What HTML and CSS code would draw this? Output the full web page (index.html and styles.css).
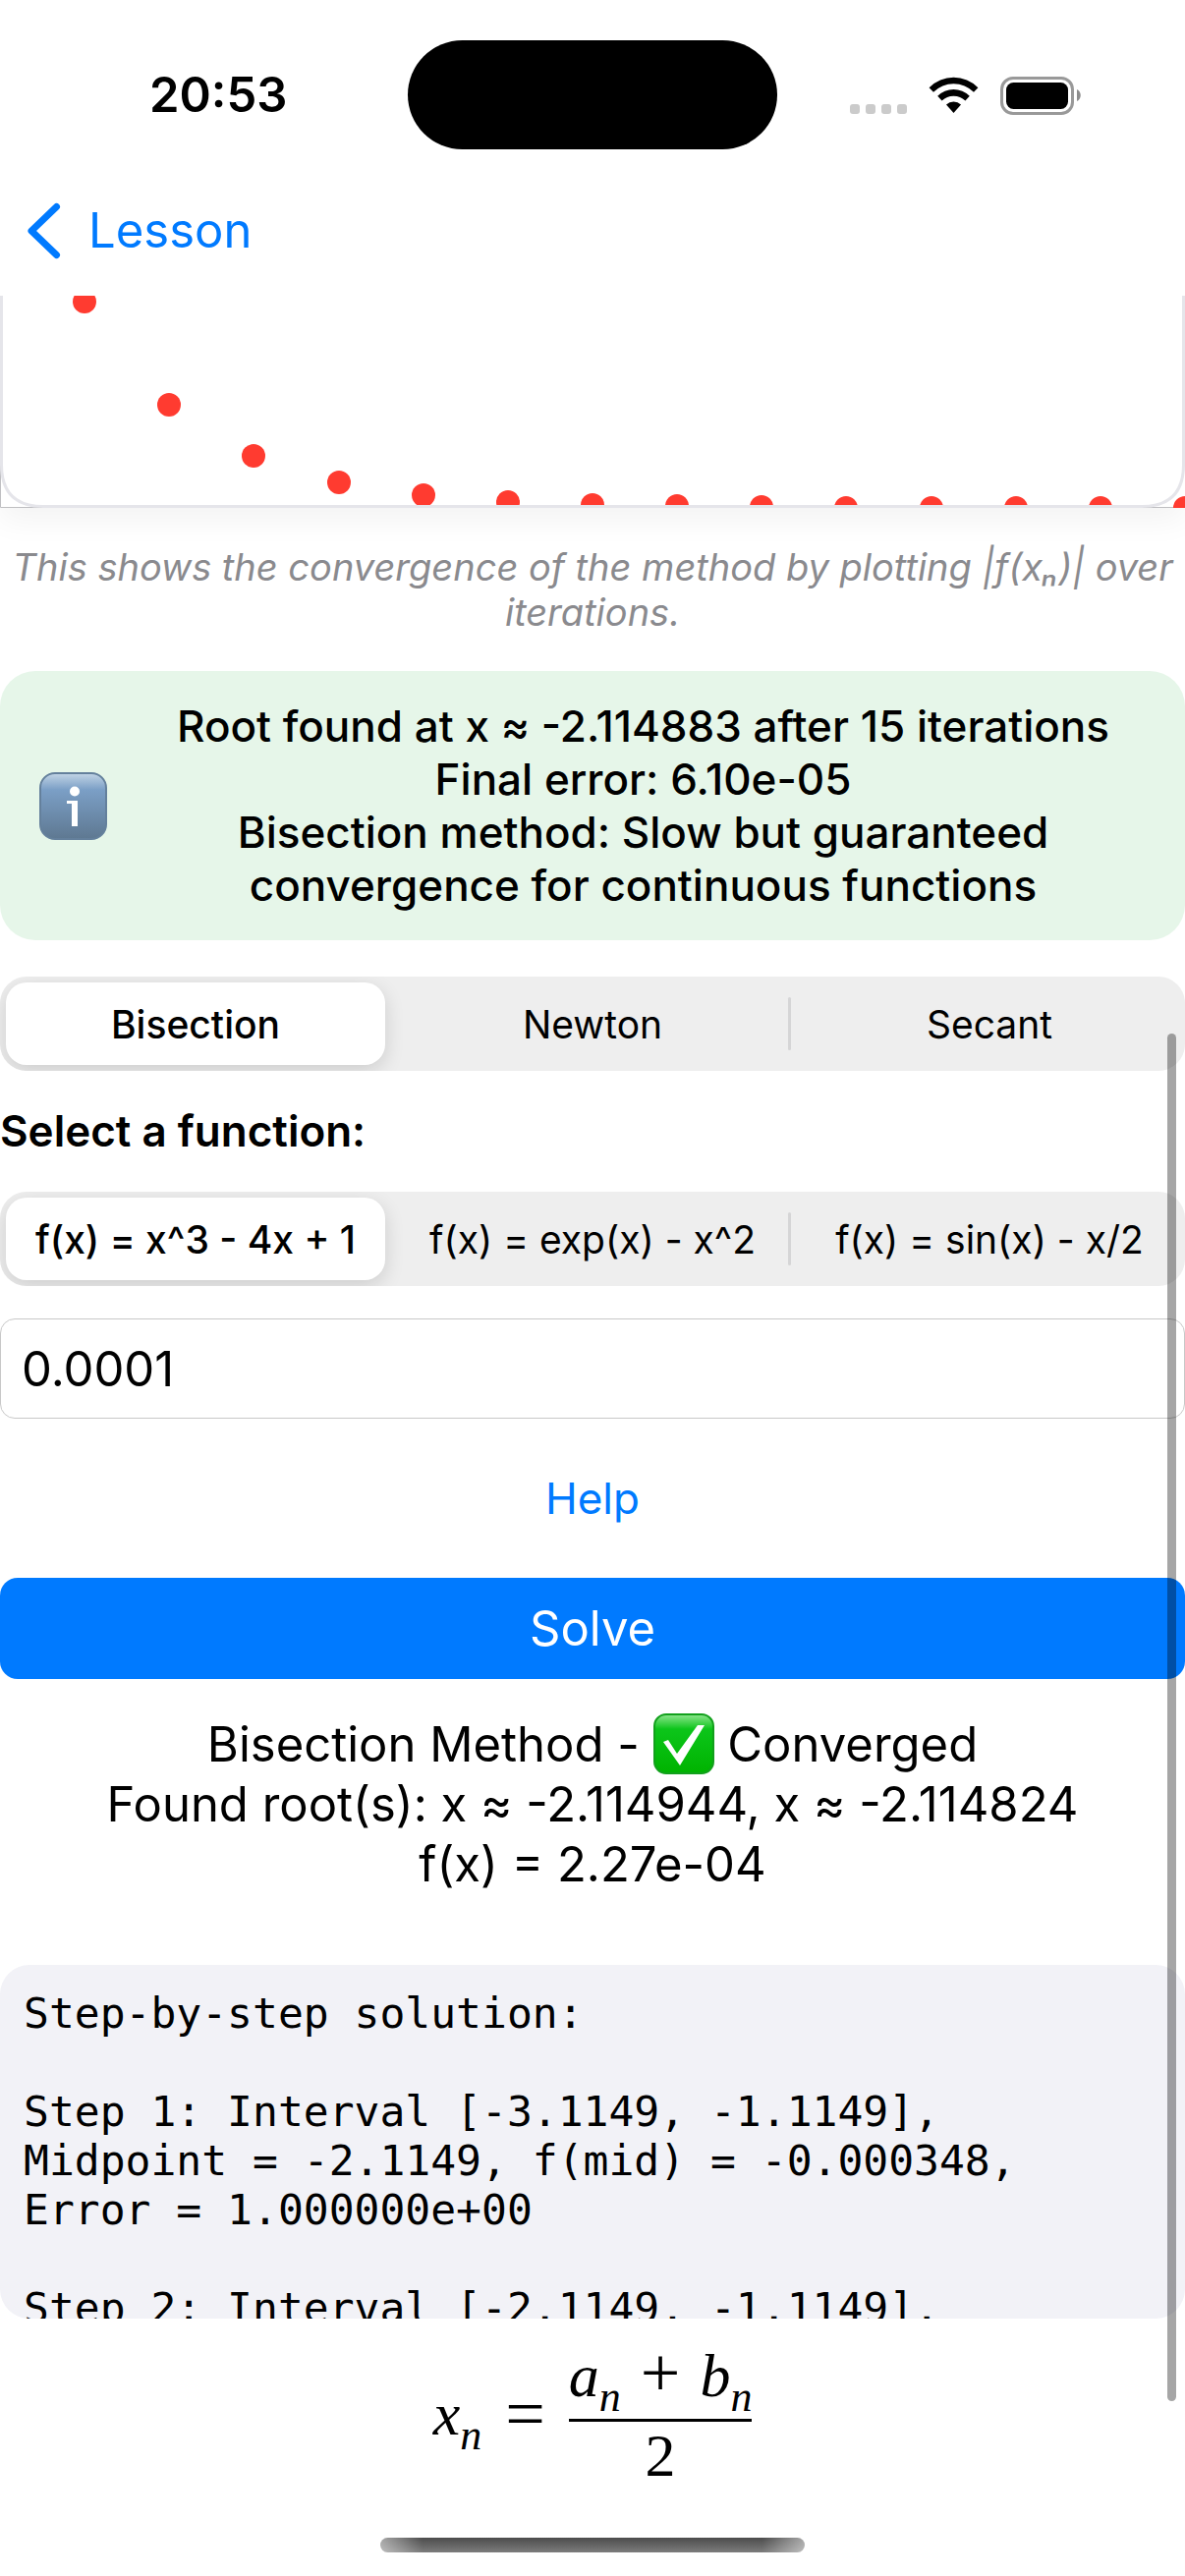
FILE: index.html
```html
<!DOCTYPE html>
<html lang="en">
<head>
<meta charset="utf-8">
<meta name="viewport" content="width=device-width, initial-scale=1">
<title>Root finding</title>
<link rel="stylesheet" href="styles.css">
</head>
<body>
<div class="screen">
  <div class="status-bar">
    <time class="status-time">20:53</time>
    <div class="island"></div>
    <div class="status-icons">
      <svg width="58" height="40" viewBox="0 0 58 40" fill="#cbcbcb" aria-hidden="true">
        <rect x="0" y="29" width="10" height="10" rx="3"/>
        <rect x="16" y="29" width="10" height="10" rx="3"/>
        <rect x="32" y="29" width="10" height="10" rx="3"/>
        <rect x="48" y="29" width="10" height="10" rx="3"/>
      </svg>
      <svg width="51" height="40" viewBox="0 0 51 40" aria-hidden="true">
        <path d="M0.6 12.2a35 35 0 0 1 49.8 0L46 16.8a29 29 0 0 0-41 0z"/>
        <path d="M9.2 20.8a23 23 0 0 1 32.6 0L37.4 25.6a17 17 0 0 0-23.8 0z"/>
        <path d="M18 29.6a10.8 10.8 0 0 1 15 0L25.500 38z"/>
      </svg>
      <svg width="83" height="40" viewBox="0 0 83 40" aria-hidden="true">
        <rect x="1.500" y="2.500" width="72" height="36" rx="11.500" fill="none" stroke="#999" stroke-width="3"/>
        <rect x="6" y="7" width="63" height="27" rx="7.500"/>
        <path d="M78 14c5 2 5 10 0 12z" fill="#8c8c8c"/>
      </svg>
    </div>
  </div>

  <nav class="nav-bar">
    <a class="back" href="#lesson">
      <svg width="34" height="58" viewBox="0 0 34 58" fill="none" stroke="currentColor" stroke-width="7" stroke-linecap="round" stroke-linejoin="round" aria-hidden="true">
        <path d="M29.500 4.500L4 29l25.500 24.500"/>
      </svg>
      <span>Lesson</span>
    </a>
  </nav>

  <main class="content">
    <svg class="chart" viewBox="0 0 1206 216" role="img" aria-label="Convergence chart">
      <defs>
        <clipPath id="plot-area"><rect x="0" y="0" width="1195" height="213"/></clipPath>
      </defs>
      <path d="M0.500 170V215.500H1206" fill="none" stroke="#bfbfc2"/>
      <path d="M1.500 -2V172Q1.500 214.500 44 214.500H1162Q1204.500 214.500 1204.500 172V-2" fill="#fff" stroke="#e5e5ea" stroke-width="3"/>
      <g fill="#ff3b30" clip-path="url(#plot-area)">
        <circle cx="86" cy="6" r="12"/>
        <circle cx="172" cy="111" r="12"/>
        <circle cx="258" cy="163" r="12"/>
        <circle cx="345" cy="190" r="12"/>
        <circle cx="431" cy="203" r="12"/>
        <circle cx="517" cy="210" r="12"/>
        <circle cx="603" cy="213" r="12"/>
        <circle cx="689" cy="214" r="12"/>
        <circle cx="775" cy="215" r="12"/>
        <circle cx="861" cy="216" r="12"/>
        <circle cx="948" cy="216" r="12"/>
        <circle cx="1034" cy="216" r="12"/>
        <circle cx="1120" cy="216" r="12"/>
      </g>
      <circle cx="1206" cy="216" r="12" fill="#ff3b30"/>
    </svg>

    <p class="caption">This shows the convergence of the method by plotting |f(xₙ)| over iterations.</p>

    <section class="info-card">
      <svg class="info-icon" width="69" height="69" viewBox="0 0 69 69" aria-hidden="true">
        <defs>
          <linearGradient id="tile" x1="0" y1="0" x2="0" y2="1">
            <stop offset="0" stop-color="#c3d5e6"/>
            <stop offset="0.250" stop-color="#7b9fc6"/>
            <stop offset="1" stop-color="#5e7891"/>
          </linearGradient>
        </defs>
        <rect x="1" y="1" width="67" height="67" rx="15" fill="url(#tile)" stroke="#64809c" stroke-width="2"/>
        <circle cx="36" cy="19.500" r="5" fill="#fff"/>
        <path d="M28 29h11v26h-6V32h-5z" fill="#fff"/>
      </svg>
      <p class="info-text">Root found at x ≈ -2.114883 after 15 iterations<br>Final error: 6.10e-05<br>Bisection method: Slow but guaranteed<br>convergence for continuous functions</p>
    </section>

    <form class="solver">
      <div class="segments" role="radiogroup" aria-label="Method">
        <label class="segment"><input type="radio" name="method" checked><span>Bisection</span></label>
        <label class="segment"><input type="radio" name="method"><span>Newton</span></label>
        <label class="segment"><input type="radio" name="method"><span>Secant</span></label>
      </div>

      <h2 class="group-title" id="function-title">Select a function:</h2>

      <div class="segments" role="radiogroup" aria-labelledby="function-title">
        <label class="segment"><input type="radio" name="fn" checked><span>f(x) = x^3 - 4x + 1</span></label>
        <label class="segment"><input type="radio" name="fn"><span>f(x) = exp(x) - x^2</span></label>
        <label class="segment"><input type="radio" name="fn"><span>f(x) = sin(x) - x/2</span></label>
      </div>

      <input class="tolerance" type="text" inputmode="decimal" value="0.0001" aria-label="Tolerance">
      <button class="help" type="button">Help</button>
      <button class="solve" type="button">Solve</button>

      <p class="result">Bisection Method - <svg class="check" width="62" height="62" viewBox="0 0 62 62" aria-hidden="true"><defs><linearGradient id="green" x1="0" y1="0" x2="0" y2="1"><stop offset="0" stop-color="#8fe58f"/><stop offset="0.250" stop-color="#0cc51a"/><stop offset="1" stop-color="#00b300"/></linearGradient></defs><rect x="1" y="1" width="60" height="60" rx="12" fill="url(#green)" stroke="#12a01c" stroke-width="2"/><path d="M10 29l5-2 9 14L45 12h7L27 53z" fill="#fff"/></svg> Converged<br>Found root(s): x ≈ -2.114944, x ≈ -2.114824<br>f(x) = 2.27e-04</p>

      <pre class="steps">Step-by-step solution:

Step 1: Interval [-3.1149, -1.1149],
Midpoint = -2.1149, f(mid) = -0.000348,
Error = 1.000000e+00

Step 2: Interval [-2.1149, -1.1149],
</pre>
    </form>

    <div class="formula">
      <span><i>x</i><sub>n</sub></span>
      <span class="operator">=</span>
      <span class="fraction">
        <span class="numerator"><span><i>a</i><sub>n</sub></span><span class="operator">+</span><span><i>b</i><sub>n</sub></span></span>
        <span class="denominator">2</span>
      </span>
    </div>

    <div class="scroll-thumb"></div>
  </main>

  <div class="home-indicator"></div>
</div>
</body>
</html>
```
FILE: styles.css
```css
* {
  box-sizing: border-box;
}

body {
  margin: 0;
  background: #fff;
  color: #000;
  font-family: Inter, "Liberation Sans", sans-serif;
}

p,
h2,
pre {
  margin: 0;
}

.screen {
  display: flex;
  flex-direction: column;
  min-height: 100vh;
  overflow: hidden;
}

/* Status bar */
.status-bar {
  display: grid;
  grid-template-columns: 1fr 376px 1fr;
  align-items: center;
  padding-top: 41px;
}

.status-time {
  padding-left: 152px;
  font-size: 49px;
  font-weight: 600;
}

.island {
  height: 111px;
  border-radius: 56px;
  background: #000;
}

.status-icons {
  display: flex;
  justify-content: flex-end;
  gap: 22px;
  padding-right: 105px;
}

/* Navigation */
.nav-bar {
  display: flex;
  padding: 54px 28px 37px;
}

.back {
  display: flex;
  align-items: center;
  gap: 28px;
  color: #007aff;
  font-size: 49px;
  line-height: 58px;
  text-decoration: none;
}

/* Scrolled content */
.content {
  position: relative;
  display: flex;
  flex-direction: column;
  gap: 37px;
}

.chart {
  display: block;
  width: 100%;
  box-shadow: 0 12px 30px rgba(0, 0, 0, 0.05);
  clip-path: inset(0 0 -60px 0);
}

.caption {
  color: #8a8a8e;
  font-size: 38px;
  font-style: italic;
  line-height: 46px;
  text-align: center;
}

.info-card {
  display: flex;
  align-items: center;
  gap: 30px;
  padding: 29px 36px 29px 40px;
  border-radius: 36px;
  background: #e6f6e9;
}

.info-icon {
  flex: none;
}

.info-text {
  flex: 1;
  font-size: 44px;
  font-weight: 500;
  line-height: 54px;
  text-align: center;
}

.solver {
  display: flex;
  flex-direction: column;
  gap: 33px;
}

.segments {
  display: grid;
  grid-template-columns: repeat(3, 1fr);
  gap: 18px;
  padding: 6px;
  border-radius: 27px;
  background: #eee;
  overflow: hidden;
}

.segment {
  position: relative;
  display: flex;
  align-items: center;
  justify-content: center;
  height: 84px;
  border-radius: 21px;
  font-size: 39px;
  white-space: nowrap;
}

.segment input {
  position: absolute;
  inset: 0;
  margin: 0;
  appearance: none;
}

.segment:has(:checked) {
  background: #fff;
  box-shadow: 0 6px 20px rgba(0, 0, 0, 0.14);
  font-weight: 500;
}

.segment:last-child::before {
  content: "";
  position: absolute;
  top: 15px;
  bottom: 15px;
  left: -12px;
  width: 3px;
  border-radius: 2px;
  background: #d5d5d6;
}

.group-title {
  font-size: 44px;
  font-weight: 600;
  line-height: 57px;
}

.tolerance {
  width: 100%;
  height: 102px;
  padding: 0 21px;
  border: 1px solid #c8c8c8;
  border-radius: 15px;
  background: #fff;
  color: #000;
  font-family: inherit;
  font-size: 49px;
}

.help,
.solve {
  padding: 0;
  border: 0;
  font-family: inherit;
}

.help {
  height: 96px;
  background: none;
  color: #007aff;
  font-size: 44px;
}

.solve {
  height: 103px;
  border-radius: 18px;
  background: #007aff;
  color: #fff;
  font-size: 49px;
}

.result {
  padding: 3px 0 39px;
  font-size: 49px;
  line-height: 61px;
  text-align: center;
}

.check {
  margin: -12px 0;
  vertical-align: -1px;
}

.steps {
  height: 360px;
  padding: 24px;
  border-radius: 30px;
  background: #f2f2f7;
  font-family: "DejaVu Sans Mono", monospace;
  font-size: 43px;
  line-height: 50px;
  overflow: hidden;
}

/* Formula */
.formula {
  display: flex;
  align-items: center;
  justify-content: center;
  gap: 24px;
  margin-top: -12px;
  font-family: "Liberation Serif", serif;
  font-size: 62px;
  line-height: 60px;
}

.formula sub {
  font-size: 44px;
  font-style: italic;
  line-height: 0;
  vertical-align: -15px;
}

.operator {
  font-size: 72px;
}

.fraction {
  display: flex;
  flex-direction: column;
  align-items: center;
}

.numerator {
  display: flex;
  gap: 20px;
  align-items: baseline;
  padding-bottom: 14px;
  border-bottom: 3px solid #000;
}

.denominator {
  padding-top: 4px;
}

.scroll-thumb {
  position: absolute;
  top: 751px;
  right: 9px;
  bottom: 85px;
  width: 9px;
  border-radius: 5px;
  background: rgba(0, 0, 0, 0.35);
}

.home-indicator {
  align-self: center;
  width: 432px;
  height: 15px;
  margin: auto 0 24px;
  border-radius: 8px;
  background:
    linear-gradient(90deg, rgba(255, 255, 255, 0.5), transparent 10%, transparent 90%, rgba(255, 255, 255, 0.5)),
    linear-gradient(#4c4c4c, #7c7c7c);
}
```
